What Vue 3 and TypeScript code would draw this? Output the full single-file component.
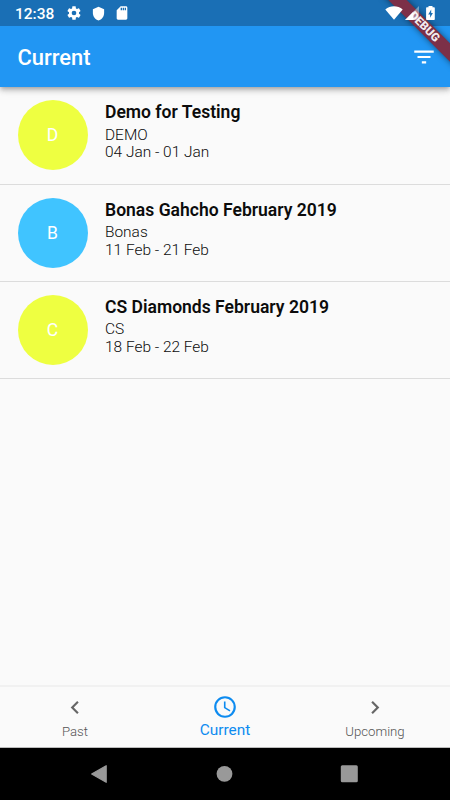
<script setup lang="ts">
interface EventItem {
  title: string
  client: string
  dates: string
  tone: string
}

const items: EventItem[] = [
  { title: 'Demo for Testing', client: 'DEMO', dates: '04 Jan - 01 Jan', tone: 'lime' },
  { title: 'Bonas Gahcho February 2019', client: 'Bonas', dates: '11 Feb - 21 Feb', tone: 'sky' },
  { title: 'CS Diamonds February 2019', client: 'CS', dates: '18 Feb - 22 Feb', tone: 'lime' },
]
</script>

<template>
  <div class="screen">
    <header class="top">
      <div class="status">
        <span class="time">12:38</span>
        <svg class="gear" viewBox="0 0 24 24"><path d="M19.43 12.98c.04-.32.07-.64.07-.98s-.03-.66-.07-.98l2.11-1.65c.19-.15.24-.42.12-.64l-2-3.46c-.12-.22-.39-.3-.61-.22l-2.49 1c-.52-.4-1.08-.73-1.69-.98l-.38-2.65C14.46 2.18 14.25 2 14 2h-4c-.25 0-.46.18-.49.42l-.38 2.65c-.61.25-1.17.59-1.69.98l-2.49-1c-.23-.09-.49 0-.61.22l-2 3.46c-.13.22-.07.49.12.64l2.11 1.65c-.04.32-.07.65-.07.98s.03.66.07.98l-2.11 1.65c-.19.15-.24.42-.12.64l2 3.46c.12.22.39.3.61.22l2.49-1c.52.4 1.08.73 1.69.98l.38 2.65c.03.24.24.42.49.42h4c.25 0 .46-.18.49-.42l.38-2.65c.61-.25 1.17-.59 1.69-.98l2.49 1c.23.09.49 0 .61-.22l2-3.46c.12-.22.07-.49-.12-.64l-2.11-1.65zM12 15.5a3.5 3.5 0 1 1 0-7 3.5 3.5 0 0 1 0 7z" /></svg>
        <svg class="shield" viewBox="0 0 24 24"><path d="M12 1L3 5v6c0 5.55 3.84 10.74 9 12 5.16-1.26 9-6.45 9-12V5l-9-4z" /></svg>
        <svg class="sd" viewBox="0 0 24 24"><path d="M18 2h-8L4.02 8 4 20c0 1.1.9 2 2 2h12c1.1 0 2-.9 2-2V4c0-1.1-.9-2-2-2zm-6 6h-2V4h2v4zm3 0h-2V4h2v4zm3 0h-2V4h2v4z" /></svg>
        <span class="spacer"></span>
        <svg class="wifi" viewBox="0 0 18 14"><path d="M.3 3.4C5.3-.8 12.700-.8 17.700 3.400L9 13.800z" /></svg>
        <svg class="signal" viewBox="0 0 14 14"><path d="M14 0v14H0z" opacity=".4" /><path d="M8.500 5.500V14H0z" /></svg>
        <svg class="battery" viewBox="0 0 9 14"><path fill-rule="evenodd" d="M2.500 0h4v1.300H8q.8 0 .8.800v11.100q0 .8-.8.800H.900q-.8 0-.8-.800V2.100q0-.8.800-.800h1.600zM5.200 3.600L2.200 8.400h1.900v3.300L6.900 7H5.200z" /></svg>
      </div>
      <div class="appbar">
        <h1>Current</h1>
        <svg class="filter" viewBox="0 0 24 24"><path d="M10 18h4v-2h-4v2zM3 6v2h18V6H3zm3 7h12v-2H6v2z" /></svg>
      </div>
      <div class="ribbon-clip"><div class="ribbon">DEBUG</div></div>
    </header>

    <main>
      <article v-for="item in items" :key="item.title" class="row">
        <div class="avatar" :class="item.tone">{{ item.title.charAt(0) }}</div>
        <div class="details">
          <h2>{{ item.title }}</h2>
          <p>{{ item.client }}</p>
          <p>{{ item.dates }}</p>
        </div>
      </article>
    </main>

    <nav class="tabs">
      <div class="tab">
        <svg viewBox="0 0 24 24"><path d="M15.410 7.410L14 6l-6 6 6 6 1.410-1.410L10.830 12z" /></svg>
        <span>Past</span>
      </div>
      <div class="tab active">
        <svg viewBox="0 0 24 24"><path d="M11.990 2C6.470 2 2 6.480 2 12s4.470 10 9.990 10C17.520 22 22 17.520 22 12S17.520 2 11.990 2zM12 20a8 8 0 1 1 0-16 8 8 0 0 1 0 16zm.5-13H11v6l5.250 3.150.75-1.230-4.500-2.670z" /></svg>
        <span>Current</span>
      </div>
      <div class="tab">
        <svg viewBox="0 0 24 24"><path d="M10 6L8.590 7.410 13.170 12l-4.580 4.590L10 18l6-6z" /></svg>
        <span>Upcoming</span>
      </div>
    </nav>

    <footer class="system">
      <svg viewBox="0 0 18 20"><path d="M16.200 1.700v16.600L1.700 10z" stroke-width="1.200" stroke-linejoin="round" /></svg>
      <svg viewBox="0 0 18 20"><circle cx="9.500" cy="9.800" r="7.900" /></svg>
      <svg viewBox="0 0 18 20"><rect x=".8" y="1.300" width="17" height="17" rx="1.500" /></svg>
    </footer>
  </div>
</template>

<style>
body {
  margin: 0;
}
</style>

<style scoped>
.screen {
  width: 450px;
  height: 800px;
  display: flex;
  flex-direction: column;
  overflow: hidden;
  background: #fafafa;
  font-family: Roboto, "Liberation Sans", sans-serif;
  color: #0c0c0c;
}
h1, h2, p {
  margin: 0;
}
svg {
  display: block;
  fill: currentColor;
  flex: none;
}
.top {
  position: relative;
  flex: none;
  height: 87px;
  background: #2196f3;
  color: #fff;
  box-shadow: 0 2px 4px -1px rgba(0, 0, 0, .2), 0 4px 5px rgba(0, 0, 0, .14), 0 1px 10px rgba(0, 0, 0, .12);
}
.status {
  height: 26px;
  box-sizing: border-box;
  background: #1a6fb5;
  display: flex;
  align-items: center;
  padding: 0 15.500px 0 15px;
}
.status > * {
  position: relative;
  z-index: 2;
}
.time {
  width: 51px;
  font-size: 15.500px;
  font-weight: 500;
  line-height: 26px;
  padding-top: 1px;
}
.gear {
  width: 16px;
  height: 16px;
}
.shield {
  width: 15px;
  height: 15px;
  margin-left: 9px;
}
.sd {
  width: 16px;
  height: 16px;
  margin-left: 8px;
}
.spacer {
  flex: 1;
}
.wifi {
  width: 18px;
  height: 14px;
  margin-bottom: 1px;
}
.signal {
  width: 14px;
  height: 14px;
  margin-left: 1.500px;
}
.battery {
  width: 9px;
  height: 14px;
  margin-left: 7px;
}
.appbar {
  height: 61px;
  display: flex;
  align-items: center;
  justify-content: space-between;
  padding: 0 13px 0 17.500px;
}
.appbar h1 {
  font-size: 21.900px;
  line-height: 26px;
  font-weight: 500;
  padding-top: 2px;
}
.filter {
  width: 26px;
  height: 26px;
}
.ribbon-clip {
  position: absolute;
  top: 0;
  right: 0;
  width: 90px;
  height: 87px;
  overflow: hidden;
}
.ribbon {
  position: absolute;
  left: 13.700px;
  top: 19.700px;
  width: 100px;
  height: 13.200px;
  transform: rotate(45deg);
  background: #7c3048;
  box-shadow: 0 0 6px rgba(0, 0, 0, .5);
  font-size: 11.700px;
  line-height: 13.600px;
  font-weight: 900;
  text-align: center;
  text-indent: 1px;
  color: rgba(255, 255, 255, .92);
}
main {
  flex: 1;
}
.row {
  height: 97px;
  box-sizing: border-box;
  border-bottom: 1px solid #dcdcdc;
  display: flex;
  padding: 13px 17.500px 0;
}
.row:first-child {
  height: 98px;
  padding-top: 13.400px;
}
.avatar {
  width: 70px;
  height: 70px;
  border-radius: 50%;
  display: flex;
  align-items: center;
  justify-content: center;
  color: #fff;
  font-size: 17.500px;
  font-weight: 400;
}
.lime {
  background: #eeff41;
}
.sky {
  background: #40c4ff;
}
.details {
  padding: 2px 0 0 17.500px;
}
.details h2 {
  font-size: 17.550px;
  line-height: 21px;
  font-weight: 600;
  margin-bottom: 3.200px;
}
.details p {
  font-size: 15.450px;
  line-height: 17.600px;
  font-weight: 300;
}
.tabs {
  flex: none;
  height: 63px;
  box-sizing: border-box;
  border-top: 2px solid #f1f1f1;
  border-bottom: 1px solid #bbb;
  display: flex;
}
.tab {
  flex: 1;
  display: flex;
  flex-direction: column;
  align-items: center;
  padding-top: 7px;
  color: #555;
}
.tab svg {
  width: 26px;
  height: 26px;
}
.tab:not(.active) svg {
  color: #666;
  padding-top: .5px;
}
.tab span {
  font-size: 13.200px;
  line-height: 18px;
  margin-top: 2.500px;
  font-weight: 300;
}
.tab.active {
  color: #0d8bf0;
}
.tab.active span {
  font-size: 15.400px;
  font-weight: 400;
  margin-top: .6px;
}
.system {
  flex: none;
  height: 52px;
  background: #000;
  color: #999;
  display: flex;
  justify-content: space-between;
  align-items: center;
  padding: 0 92px 0 90px;
}
.system svg {
  width: 18px;
  height: 20px;
  stroke: currentColor;
  stroke-width: 0;
}
</style>
